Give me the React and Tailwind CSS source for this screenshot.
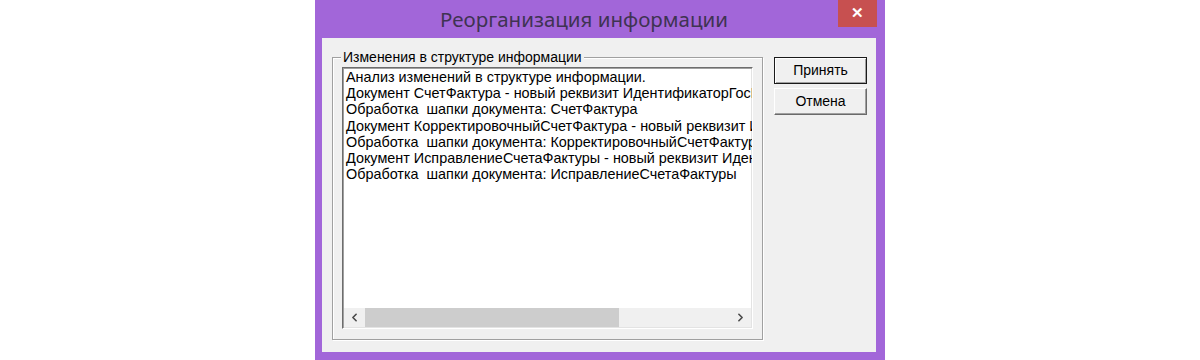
import { ChevronLeft, ChevronRight } from "lucide-react";

const lines = [
  "Анализ изменений в структуре информации.",
  "Документ СчетФактура - новый реквизит ИдентификаторГосКонтракта",
  "Обработка  шапки документа: СчетФактура",
  "Документ КорректировочныйСчетФактура - новый реквизит ИдентификаторГосКонтракта",
  "Обработка  шапки документа: КорректировочныйСчетФактура",
  "Документ ИсправлениеСчетаФактуры - новый реквизит ИдентификаторГосКонтракта",
  "Обработка  шапки документа: ИсправлениеСчетаФактуры",
];

function Button({ children, isDefault }) {
  return (
    <button
      className={
        isDefault
          ? "h-[27px] w-[93px] border border-[#1a1a1a] bg-[#f0f0f0] shadow-[inset_1px_1px_0_#fff,inset_-1px_-1px_0_#a0a0a0] text-[14px] text-black"
          : "h-[27px] w-[93px] border border-[#fff] border-r-[#6a6a6a] border-b-[#6a6a6a] bg-[#f0f0f0] shadow-[inset_-1px_-1px_0_#a0a0a0] text-[14px] text-black"
      }
    >
      {children}
    </button>
  );
}

export default function App() {
  return (
    <div
      className="flex h-[360px] w-[1200px] justify-center bg-white"
      style={{ fontFamily: '"Liberation Sans", Arial, sans-serif' }}
    >
      <div className="flex w-[570px] flex-col bg-[#a266d9] pb-[8px] pl-[7px] pr-[9px]">
        <div className="relative flex h-[38px] items-center justify-center">
          <span
            className="pr-[30px] text-[20.5px] text-[#3f3352]"
            style={{ fontFamily: '"Noto Sans", "Open Sans", sans-serif' }}
          >
            Реорганизация информации
          </span>
          <div className="absolute right-[-1px] top-0 flex h-[27px] w-[39px] items-center justify-center bg-[#c75050] text-[15px] font-bold text-white">
            ✕
          </div>
        </div>

        <div className="flex flex-1 gap-[11px] bg-[#f0f0f0] pl-[10px] pr-[10px] pt-[19px] pb-[12px]">
          <div className="relative h-[283px] w-[431px] border border-[#a0a0a0] shadow-[inset_1px_1px_0_#fff,1px_1px_0_#fff] pl-[9px] pr-[9px] pt-[9px]">
            <span className="absolute left-[8px] top-[-10px] bg-[#f0f0f0] px-[2px] text-[14px] leading-[18px] text-black">
              Изменения в структуре информации
            </span>
            <div className="flex h-[262px] flex-col border border-[#6d6d6d] border-b-[#fff] border-r-[#fff] bg-white shadow-[inset_1px_1px_0_#a0a0a0,inset_-1px_-1px_0_#e3e3e3]">
              <div className="flex-1 overflow-hidden pl-[3px] pt-[1px]">
                {lines.map((line, i) => (
                  <div
                    key={i}
                    className="whitespace-pre text-[14.4px] leading-[16.2px] text-black"
                  >
                    {line}
                  </div>
                ))}
              </div>
              <div className="mx-[1px] mb-[1px] flex h-[19px] bg-[#f0f0f0]">
                <div className="flex w-[21px] items-center justify-center text-[#4a4a4a]">
                  <ChevronLeft size={13} strokeWidth={3} />
                </div>
                <div className="w-[254px] bg-[#cdcdcd]" />
                <div className="flex-1" />
                <div className="flex w-[21px] items-center justify-center text-[#4a4a4a]">
                  <ChevronRight size={13} strokeWidth={3} />
                </div>
              </div>
            </div>
          </div>

          <div className="flex flex-col gap-[4px]">
            <Button isDefault>Принять</Button>
            <Button>Отмена</Button>
          </div>
        </div>
      </div>
    </div>
  );
}
